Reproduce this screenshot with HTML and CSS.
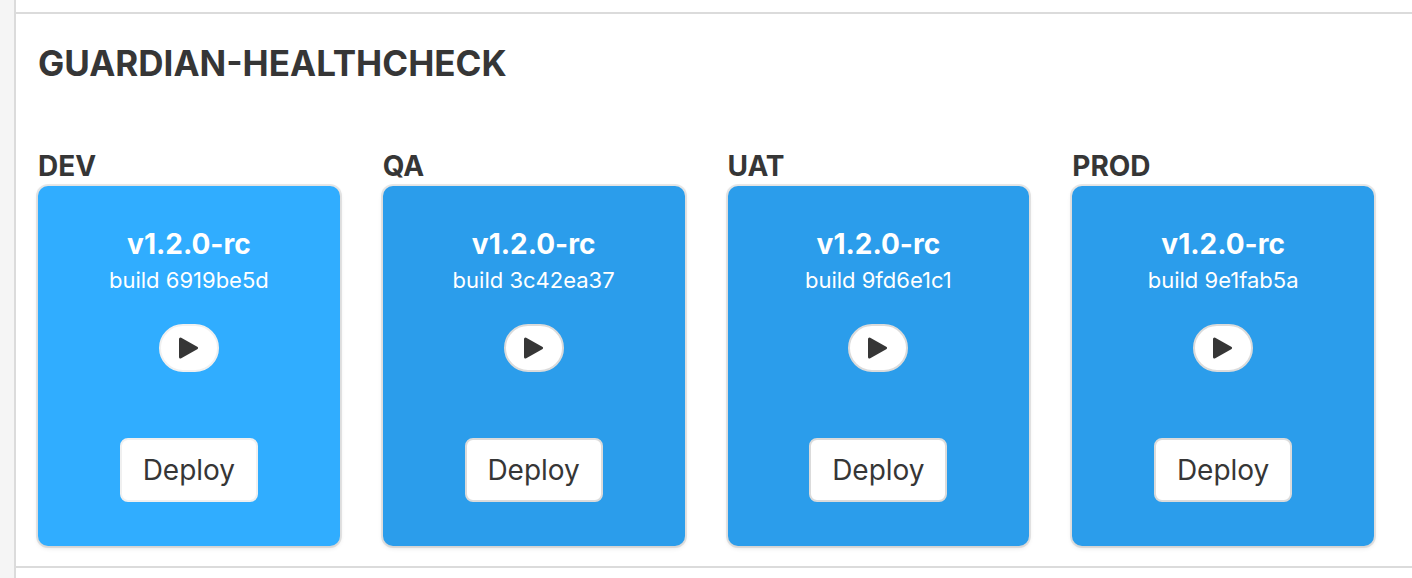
FILE: index.html
```html
<!DOCTYPE html>
<html lang="en">
<head>
<meta charset="utf-8">
<title>Deployments</title>
<link rel="stylesheet" href="styles.css">
</head>
<body>
<main class="panel">
<section class="app">
<h1 class="app-title">GUARDIAN-HEALTHCHECK</h1>
<div class="stages">
<section class="stage">
<h2 class="stage-name">DEV</h2>
<div class="card card-active">
<h3 class="version">v1.2.0-rc</h3>
<p class="build">build 6919be5d</p>
<button class="play" type="button" aria-label="Run"><svg class="play-icon" viewBox="0 0 20 22"><path d="M1.500 2 17.500 11 1.500 20z"/></svg></button>
<button class="deploy" type="button">Deploy</button>
</div>
</section>
<section class="stage">
<h2 class="stage-name">QA</h2>
<div class="card">
<h3 class="version">v1.2.0-rc</h3>
<p class="build">build 3c42ea37</p>
<button class="play" type="button" aria-label="Run"><svg class="play-icon" viewBox="0 0 20 22"><path d="M1.500 2 17.500 11 1.500 20z"/></svg></button>
<button class="deploy" type="button">Deploy</button>
</div>
</section>
<section class="stage">
<h2 class="stage-name">UAT</h2>
<div class="card">
<h3 class="version">v1.2.0-rc</h3>
<p class="build">build 9fd6e1c1</p>
<button class="play" type="button" aria-label="Run"><svg class="play-icon" viewBox="0 0 20 22"><path d="M1.500 2 17.500 11 1.500 20z"/></svg></button>
<button class="deploy" type="button">Deploy</button>
</div>
</section>
<section class="stage">
<h2 class="stage-name">PROD</h2>
<div class="card">
<h3 class="version">v1.2.0-rc</h3>
<p class="build">build 9e1fab5a</p>
<button class="play" type="button" aria-label="Run"><svg class="play-icon" viewBox="0 0 20 22"><path d="M1.500 2 17.500 11 1.500 20z"/></svg></button>
<button class="deploy" type="button">Deploy</button>
</div>
</section>
</div>
</section>
</main>
</body>
</html>
```
FILE: styles.css
```css
* { box-sizing: border-box; }
body {
  margin: 0;
  padding-left: 14px;
  background: #f5f5f5;
  color: #363636;
  font-family: Inter, "Liberation Sans", sans-serif;
}
h1, h2, h3, p { margin: 0; }
.panel {
  min-height: 100vh;
  padding-top: 12px;
  border-left: 2px solid #dbdbdb;
  background: #fff;
}
.app {
  padding: 28px 38px 20px 22px;
  border-top: 2px solid #dbdbdb;
  border-bottom: 2px solid #dbdbdb;
}
.app-title { font-size: 35px; line-height: 42px; font-weight: 700; }
.stages {
  display: grid;
  grid-template-columns: repeat(4, 1fr);
  gap: 43px;
  margin-top: 64px;
}
.stage-name { padding-bottom: 2px; font-size: 28px; line-height: 36px; font-weight: 700; }
.card {
  display: flex;
  flex-direction: column;
  align-items: center;
  padding: 38px 20px 44px;
  border-radius: 10px;
  background: #2b9deb;
  box-shadow: 0 2px 5px rgba(10, 10, 10, 0.12), 0 0 0 2px rgba(10, 10, 10, 0.09);
  color: #fff;
}
.card-active { background: #30adff; }
.version { font-size: 28px; line-height: 40px; font-weight: 700; }
.build { font-size: 22px; line-height: 32px; }
.play, .deploy {
  display: flex;
  align-items: center;
  justify-content: center;
  border: 2px solid #dbdbdb;
  background: #fff;
  color: #363636;
  font-family: inherit;
}
.card-active .play, .card-active .deploy { border-color: #f0f0f0; }
.play { width: 60px; height: 48px; margin-top: 28px; padding: 0; border-radius: 24px; }
.play-icon { width: 20px; height: 22px; fill: #363636; stroke: #363636; stroke-width: 3px; stroke-linejoin: round; }
.deploy { min-width: 138px; height: 64px; margin-top: 66px; padding: 0 20px; border-radius: 8px; font-size: 28px; line-height: 36px; }
```
